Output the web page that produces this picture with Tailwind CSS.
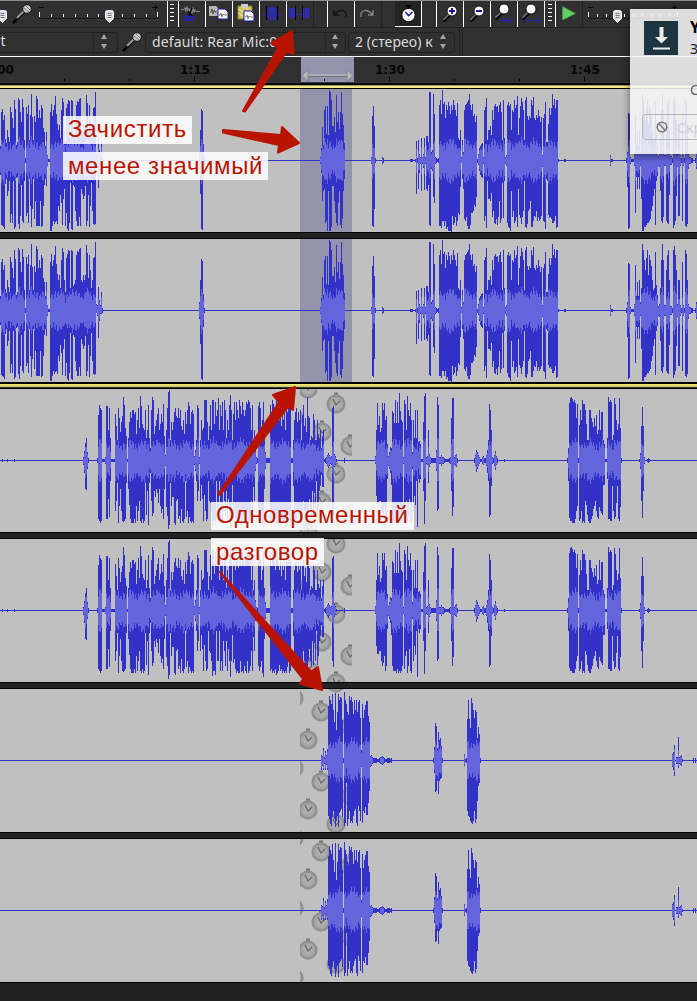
<!DOCTYPE html>
<html lang="ru">
<head>
<meta charset="utf-8">
<title>Audio editor</title>
<script src="https://cdn.jsdelivr.net/npm/@tailwindcss/browser@4"></script>
</head>
<body class="bg-[#222] overflow-hidden">
<svg class="absolute w-0 h-0">
  <defs>
    <radialGradient id="cg"><stop offset="0" stop-color="#b6b6b6"/><stop offset=".65" stop-color="#a6a6a6"/><stop offset=".85" stop-color="#8c8c8c"/><stop offset="1" stop-color="#9a9a9a"/></radialGradient>
    <g id="clock"><rect x="-2" y="-11.500" width="4" height="3" fill="#777"/><circle r="9.700" fill="url(#cg)"/><path d="M-3-5L0 1L4-3" fill="none" stroke="#666" stroke-width="1.300"/></g>
    <g id="mic"><path d="M1 19L12 8" stroke="#000" stroke-width="2.500"/><path d="M5 14L13 6" stroke="#999" stroke-width="2.200"/><circle cx="15" cy="5" r="4.300" fill="#ccc" stroke="#111"/><path d="M12 4l5 4M14 2l4 4" stroke="#777"/></g>
    <g id="thumb"><path d="M.5 2.500q0-2 2-2h4q2 0 2 2v6l-4 4l-4-4z" fill="#dfdfea" stroke="#fff"/><path d="M2.500 3.500h4M2.500 5.500h4M2.500 7.500h4" stroke="#77778a"/></g>
    <g id="updown" fill="#a3a3a3"><path d="M0 5L3 0L6 5zM0 10h6L3 15z"/></g>
    <g id="lens"><path d="M7 21L14 14" stroke="#000" stroke-width="4"/><path d="M7 20L14 13" stroke="#666" stroke-width="2"/></g>
    <path id="page" d="M0 0h7l3 3v7H0z"/>
  </defs>
</svg>
<main class="relative w-[697px] h-[1001px] overflow-hidden flex flex-col">

  <header class="h-[28px] shrink-0 bg-[#303030] border-t border-[#888c8c] border-b border-b-[#242424] flex">
    <svg class="w-[168px] h-[26px] shrink-0" viewBox="0 1 168 26">
      <use href="#thumb" x="-2" y="10"/>
      <use href="#mic" x="12" y="4"/>
      <path d="M39 18.500H161" stroke="#161616"/><path d="M39 7.500h5M152 7.500h6M155.500 5v5" stroke="#080808"/>
      <path d="M39.500 12v5M157.500 12v5M51.500 14v3M63.500 14v3M75.500 14v3M87.500 14v3M98.500 14v3M122.500 14v3M134.500 14v3M146.500 14v3" stroke="#fff"/>
      <use href="#thumb" x="105" y="10"/>
      <path d="M167.500 1v26" stroke="#fff"/>
    </svg>
    <svg class="w-[10px] h-[26px] shrink-0" viewBox="168 1 10 26"><path d="M170 4.500h4M170 8.500h4M170 12.500h4M170 16.500h4M170 20.500h4" stroke="#fff"/></svg>
    <svg class="w-[27px] h-[26px] shrink-0 border-l border-white" viewBox="1 1 26 26"><path d="M3 9.500h3l1-2 1 4 1-5 1 5 1-3 1 5 1-5 1 5 1-6 1 5 1-3 1 2h4" fill="none" stroke="#8a8a8a"/><path d="M10 11l4 5M14 8l-3 8" stroke="#000" stroke-width="1.300"/><circle cx="8.500" cy="18" r="2.200" fill="none" stroke="#2222c8" stroke-width="1.400"/><circle cx="13" cy="18.500" r="2.200" fill="none" stroke="#2222c8" stroke-width="1.400"/></svg>
    <svg class="w-[27px] h-[26px] shrink-0 border-l border-white" viewBox="1 1 26 26"><use href="#page" x="4" y="6" fill="#b5b5b5"/><path d="M5 12h1l1-3 1 5 1-4 1 2h2" stroke="#555" fill="none"/><use href="#page" x="13" y="9" fill="#fff" stroke="#1818a0"/><path d="M14 15h1l1-2 1 4 1-3 1 1h3" stroke="#777" fill="none"/></svg>
    <svg class="w-[27px] h-[26px] shrink-0 border-l border-white" viewBox="1 1 26 26"><path d="M6 6h14v13H6z" fill="#d0c25c" stroke="#8a7b20"/><path d="M6 9l14 8M6 13l9 6M10 6l10 6" stroke="#efe49b"/><rect x="9" y="4" width="7" height="4" fill="#ccc"/><use href="#page" x="12" y="11" fill="#fff" stroke="#1818a0"/><path d="M13 17h1l1-2 1 4 1-3 1 1h3" stroke="#777" fill="none"/></svg>
    <svg class="w-[27px] h-[26px] shrink-0 border-l border-white" viewBox="1 1 26 26"><path d="M3 14.500h5M18 14.500h5" stroke="#2b2bd0"/><path d="M9 18V8h2v11h2V8h2v11h2V8" fill="none" stroke="#2c2cd8" stroke-width="1.300"/><path d="M7.500 6v14M18.500 6v14" stroke="#000" stroke-width="1.300"/></svg>
    <svg class="w-[27px] h-[26px] shrink-0 border-l border-white" viewBox="1 1 26 26"><path d="M3.500 17V9h2v9h1.500V8h1.500v9M10 14.500h7M17.500 17V9h2v9h1.500V9h1.500v9" fill="none" stroke="#2c2cd8" stroke-width="1.200"/><path d="M9.500 6v14M16.500 6v14" stroke="#000"/></svg>
    <div class="w-[14px] shrink-0 border-l border-[#222]"></div>
    <svg class="w-[27px] h-[26px] shrink-0 border-l border-white" viewBox="1 1 26 26"><path d="M7 10v5h5M7 15q7-8 12-2v4" fill="none" stroke="#111" stroke-width="1.300"/></svg>
    <svg class="w-[27px] h-[26px] shrink-0 border-l border-white" viewBox="1 1 26 26"><path d="M19 10v5h-5M19 15q-7-8-12-2v4" fill="none" stroke="#858585" stroke-width="1.300"/></svg>
    <div class="w-[14px] shrink-0 border-l border-[#222]"></div>
    <svg class="w-[27px] h-[26px] shrink-0 border-r border-b border-white bg-[#232323]" viewBox="0 1 26 25"><circle cx="13.500" cy="15" r="6.700" fill="#fff" stroke="#000"/><path d="M11 6h5M13.500 6v3" stroke="#000" stroke-width="2"/><path d="M10.500 12l3 3.500 4-3.500" stroke="#1a1aa8" fill="none" stroke-width="1.600"/></svg>
    <div class="w-[14px] shrink-0"></div>
    <svg class="w-[27px] h-[26px] shrink-0 border-l border-white" viewBox="1 1 26 26"><use href="#lens"/><circle cx="16" cy="11" r="5" fill="#fff" stroke="#111"/><path d="M13 11h6M16 8v6" stroke="#1818a8" stroke-width="2"/></svg>
    <svg class="w-[27px] h-[26px] shrink-0 border-l border-white" viewBox="1 1 26 26"><use href="#lens"/><circle cx="16" cy="11" r="5" fill="#fff" stroke="#111"/><path d="M13 11h6" stroke="#1818a8" stroke-width="2"/></svg>
    <svg class="w-[27px] h-[26px] shrink-0 border-l border-white" viewBox="1 1 26 26"><use href="#lens" x="-2" y="-2"/><circle cx="14" cy="9" r="5" fill="#fff" stroke="#111"/><path d="M10 20.500h13M13 18l3 2.500-3 2.500M20 18l-3 2.500 3 2.500" stroke="#2020c0" fill="none"/></svg>
    <svg class="w-[27px] h-[26px] shrink-0 border-l border-white" viewBox="1 1 26 26"><use href="#lens" x="-2" y="-2"/><circle cx="14" cy="9" r="5" fill="#fff" stroke="#111"/><path d="M10.500 18v5M22.500 18v5M11 20.500h12" stroke="#2020c0" fill="none"/></svg>
    <svg class="w-[12px] h-[26px] shrink-0 border-r border-l border-white" viewBox="0 1 10 26"><path d="M3 4.500h4M3 8.500h4M3 12.500h4M3 16.500h4M3 20.500h4" stroke="#fff"/></svg>
    <svg class="w-[27px] h-[26px] shrink-0 border-r border-[#222]" viewBox="0 1 27 26"><path d="M7 6.500L20 13.500L7 20z" fill="#62d062" stroke="#4cab4c"/></svg>
    <svg class="w-[114px] h-[26px] shrink-0" viewBox="583 1 114 26"><path d="M588 18.500h92" stroke="#161616"/><path d="M588 7.500h5M672 7.500h5M674.500 5v5" stroke="#080808"/><path d="M588.500 12v5M597.500 14v3M606.500 14v3M624.500 14v3M633.500 14v3M642.500 14v3M651.500 14v3M660.500 14v3M669.500 14v3M677.500 12v5" stroke="#fff"/><use href="#thumb" x="613" y="10"/></svg>
  </header>

  <section class="h-[28px] shrink-0 bg-[#303030] flex items-center text-[#dcdcdc] text-[14px]" style="font-family:'Noto Sans','Open Sans',sans-serif">
    <div class="w-[118px] h-[21px] border border-l-0 border-[#222] rounded-r-[3px] flex items-center shrink-0"><span class="w-[97px] h-[20px] leading-[18px] border-r border-[#262626]"><span class="-ml-[3px]">lt</span></span><svg class="w-[18px] h-[16px] ml-[6px]"><use href="#updown" x="1"/></svg></div>
    <svg class="w-[27px] h-[22px] shrink-0"><use href="#mic" x="4" y="1"/></svg>
    <div class="w-[201px] h-[21px] border border-[#222] rounded-[3px] flex items-center shrink-0"><span class="w-[180px] pl-[6px] h-[19px] leading-[17px] border-r border-[#262626] whitespace-nowrap tracking-[.15px]">default: Rear Mic:0</span><svg class="w-[14px] h-[16px] ml-[5px]"><use href="#updown" x="1"/></svg></div>
    <div class="ml-[2px] w-[107px] h-[21px] border border-[#222] rounded-[3px] flex items-center shrink-0"><span class="w-[84px] pl-[6px] h-[19px] leading-[17px] whitespace-nowrap tracking-[.1px]">2 (стерео) к</span><svg class="w-[14px] h-[16px] ml-[7px]"><use href="#updown"/></svg></div>
    <div class="ml-[4px] w-[4px] h-full border-x border-[#1f1f1f]"></div>
  </section>

  <section class="h-[29px] shrink-0 border-t border-white bg-[#303030]">
    <svg class="w-[697px] h-[28px]" viewBox="0 57 697 28" style="font-family:'DejaVu Sans',sans-serif">
      <rect x="301" y="57" width="53" height="25" fill="#9294ab"/>
      <g font-size="12" font-weight="bold" fill="#050505"><text x="-16" y="74">1:00</text><text x="180" y="74">1:15</text><text x="375" y="74">1:30</text><text x="570" y="74">1:45</text></g>
      <path d="M64.500 79v2M129.500 79v2M194.500 77v4M259.500 79v2M324.500 79v2M389.500 77v4M454.500 79v2M519.500 79v2M584.500 77v4" stroke="#000"/>
      <path d="M302 75.500l6-6v12zM353 75.500l-6-6v12z" fill="#b8b8b8" stroke="#777" stroke-width=".7"/><path d="M308 75h39" stroke="#c6c6c6"/><path d="M308 76.500h39" stroke="#777"/>
      <rect y="82" width="697" height="1" fill="#3a3a3a"/><rect y="83" width="697" height="2" fill="#050505"/>
    </svg>
  </section>

  <div class="h-[3px] shrink-0 bg-[#f5ea86] border-t border-[#a29c65]"></div>
  <div class="flex flex-col shrink-0">
    <svg data-track="A" class="w-[697px] h-[145px] border-y border-black bg-[#c0c0c0]"></svg>
    <div class="h-[5px] bg-[#222]"></div>
    <svg data-track="A" class="w-[697px] h-[145px] border-y border-black bg-[#c0c0c0]"></svg>
  </div>
  <div class="h-[5px] shrink-0 border-t border-t-black border-b border-b-[#333318] bg-linear-to-b from-[#f8ee70] to-[#c9c27c]"></div>
  <div class="flex flex-col gap-[5px] bg-[#222] shrink-0">
    <svg data-track="B" data-top="389" class="w-[697px] h-[145px] border-y border-black bg-[#c0c0c0]"></svg>
    <svg data-track="B" data-top="539" class="w-[697px] h-[145px] border-y border-black bg-[#c0c0c0]"></svg>
    <svg data-track="C" data-top="689" class="w-[697px] h-[145px] border-y border-black bg-[#c0c0c0]"></svg>
    <svg data-track="C" data-top="839" class="w-[697px] h-[145px] border-y border-black bg-[#c0c0c0]"></svg>
  </div>

  <svg class="absolute inset-0 w-[697px] h-[1001px]" fill="#b81400" stroke="#b81400" stroke-width="2" stroke-linejoin="round">
    <path d="M243 111L278 48L271 43L292 31L293.500 54L287 51L245 111.500z"/>
    <path d="M223 130L281 135L282 127L299 143L278 152.500L279 145L223 132.500z"/>
    <path d="M218.500 494L279 402L273 395L295 387L293 410L288 407L220 495z"/>
    <path d="M220 572L311 671.500L318 667L322 690L300 683.500L303 679L221 574z"/>
  </svg>

  <div class="absolute left-[63px] top-[116px] flex flex-col items-start gap-[8px] text-[24px] text-[#b81400]" style="font-family:'Liberation Sans',Arial,sans-serif">
    <span class="w-[129px] h-[28px] leading-[26px] pl-[5px] bg-white/85 whitespace-nowrap tracking-[.65px]">Зачистить</span>
    <span class="w-[205px] h-[28px] leading-[28px] pl-[5px] bg-white/85 whitespace-nowrap tracking-[.6px]">менее значимый</span>
  </div>
  <div class="absolute left-[211px] top-[502px] flex flex-col items-start gap-[8px] text-[24px] text-[#b81400]" style="font-family:'Liberation Sans',Arial,sans-serif">
    <span class="w-[203px] h-[28px] leading-[26px] pl-[5px] bg-white/85 whitespace-nowrap tracking-[.55px]">Одновременный</span>
    <span class="w-[113px] h-[28px] leading-[28px] pl-[5px] bg-white/85 whitespace-nowrap tracking-[.55px]">разговор</span>
  </div>

  <aside class="absolute left-[630px] top-[9px] w-[180px] h-[145px] bg-[#f5f5f5]/88 shadow-[0_2px_8px_rgba(0,0,0,.5)] text-[14px]" style="font-family:'Noto Sans',sans-serif">
    <div class="flex pt-[12px] pl-[14px]">
      <svg class="w-[34px] h-[34px] bg-[#1d3540] shrink-0" viewBox="0 0 34 34" fill="#ecece8"><path d="M15.500 6h4v10h4.500L17.500 22.500L11 16h4.500zM9 26.500h17v2H9z"/></svg>
      <div class="ml-[12px] -mt-[5px] leading-[22px]"><p class="font-bold text-[16px] text-black">Y</p><p class="text-[#222]">З</p></div>
    </div>
    <p class="ml-[60px] mt-[20px] leading-[20px] text-[#666]">С</p>
    <div class="ml-[12px] mt-[14px] w-[150px] h-[26px] rounded-[4px] border border-[#b4b4b8] flex items-center text-[#cfcfd3]">
      <svg class="w-[12px] h-[12px] ml-[13px] mr-[9px]" fill="none" stroke="#77777c" stroke-width="1.500"><circle cx="6" cy="6" r="4.800"/><path d="M2.500 2.500l7 7"/></svg>Скрыть
    </div>
  </aside>
</main>

<script>
// Amplitude columns: "x: up/down ..." one entry per pixel column, in pixels from the centre line.
const WAVES = {
A: `0: 14 48/64 51/65 40/66 45/68 21/23 17/18 30/35 23/30 18/20 53/62 48/53 42/62 32/20 60/68 51/66 15/17 18/16 62/63 60/68 48/55 38/24 61/60 53/62 20 2 53/55 46/52 55/62 20/18 45 66 43/48 20/18 44/58 38/40 64/65 61/65 42/65 50/65 42/40 55/66 52/65 32/45 28/24 14/18 28/25 5 1 1 48/70 56/70 44/65 50/60 55/63 64/61 46/60 36/63 30/45 35/50 22/34 50/42 62/64 58/38 30/28 18/65 52 56/68 60/70 59/62 22 60/68 59/69 24 26 30/50 55/60 59/65 58/65 61/56 62/65 30/28 28/33 35/38 30/35 35/25 65 57/60 32/34 55/66 40/45 22 30/50 52/63 53/64 68/63 6/2 5 23/27 10 5/3 18/3 2
199: 8 30/33 51/68 49/69 16 2
320: 3 12 33/40 15/30 50/28 54/62 26/60 54/70 25/30 70 68/70 60/66 34/25 34/25 43/40 28/52 65/62 38/65 48/42 31/30 48/64 68/67 46/58 35/30 17/18
371: 3 44/65 54/66 34/48 2
382: 3 2
410: 1 1 1
415: 1 19/33 2 20/28 6/12 3 22/30 3 6/7 22/29 3 24/28 24/30 18/24 68/64 68/65 8 10 66/36 46/42 3 2 1 2 55/65 60/65 46/67 70/60 56/60 58/65 42/60 55/68 50/66 58/70 54/70 46/70 55/71 50/55 60/64 55/62 50/56 44/65 57/60 22/52 20/54 30/26 3/2 20/18 8/28 50/58 55/60 56 58/65 60/68 66/68 55/64 50/52 56/52 44/50 46/44 38/46 44/36 1/2 6/4 12/10 14 16 17 3 50/60 53/55 62/67 20 30/38 30/38 34/40 25/32 50/56 40/50 54/62 56/63 53/58 54/64 48/56 55/40 58/62 48/58 20/22 60/57 22/20 3 5 55/62 58/66 54/67 56/70 30 50/56 48/50 60/62 52/60 55/56 64/66 25/28 42/54 54/57 62/63 58/56 50 20 60/66 63/67 44/63 40/50 44/48 42/40 60/66 55/66 63/60 42/55 40/56 45/50 42/60 50/56 44/60 38/58 43/55 5/6 42/60 46/61 58/68 18 18/20 36/54 52/57 45/56 52/58 66/62 55/62 61/60 52/55 60/67 60/66 1
564: 1 1
610: 5 1 1
626: 2 8/26 47/68 46/67 3 1 1 1 6/5 45/52 14/16 28 14/16 30/28 8/5 22/38 66/70 60/70 50/66 40/66 52/64 60/62 35/62 55/60 50/58 44/50 30/45 20/35 22/28 58/64 25/20 15 4/5 6 22/30 50/60 66/62 50/56 5 5 40/60 55/62 60/63 30/34 4 4 2 60/67 64 55/60 40/35 6 30/55 30/55 5 2 48/60 5 2 60/65 56/66 30/63 6/8 3 3 2 2 0 0 2 8 9`,
B: `2: 1
7: 1
14: 1
83: 3/4 9/12 17/28 22/29 8 2
97: 2 45/58 55/60 52/62 50/60 1 1 1 3 54/58 54/58 30/38 52/56 22/20 1 1 1 1 46/50 34/40 20/22 52/62 42/45 28 38/50 44/60 63/61 55/60 32/58 24/22 1 22/28 38/44 48/58 42/62 50/62 50/62 46/58 48/62 26/45 40/60 52/50 32/40 64/60 54/62 36/58 32/62 30/60 50/22 22/54 30 55/64 22 12 50/40 63/55 60/52 26/30 34/36 40/28 46/32 52/42 30/28 36/45 46/52 38/48 56/58 24/28 5 30/46 52/55 68 70/64 20/22 38/45 30/36 38/36 48/62 52/64 44/40 42/38 52/58 42/55 50/62 34/48 30/60 40/62 26/58 48/20 36/56 50 58/62 54/56 36/60 48/62 50/60 46/62 4 10 20 55/40 52/30 3 20/40 40/24 30/38 32/60 60/34 60/50 60 38/58 20 34/40 55/42 30/50 60/65 60 36/60 58/64 44/20 50 62/50 30/20 55/60 44/50 58/60 30 60/40 50/55 22/30 40/60 30/38 55/50 65/66 50 20/24 46/52 58/48 40/58 58/62 50/60 42/62 60/62 54/50 46/61 58/60 50/62 44/55 50/60 58/62 56/50 60/62 58/60 52/55 30/40 55/60 20/26 30/40 10 3 2 54/55 58/60 52/56 30/50 40/62 58/66 22/28 8 2 2 2 2 55/60 44/58 60/62 56/60 48/62 40/58 62/64 55/62 44/60 40/54 52/60 34/58 48/62 40/60 62 30/60 55/62 48/56 60/50 54/62 56/60 2 2 20/25 40/50 48/60 52/58 38/50 48/55 40/50 50/60 20/56 45/50 55/40 34/50 42/55 28/58 63/60 44/50 42/38 20/50 24/55 22/30 46/54 40/32 20/50 20 40/54 26/45 22/30 30/25 12/14 24/26 30/26 1 2 3 5 7 5 3 4 52/50 54/56 6 4 1
344: 2
375: 4/3 30/35 57/43 35/43 44/40 28/40 32/50 57/55 50/52 57/45 40/60 44/55 16/18 4/5 8 13/12 12/24 49/55 47/60 37/60 60 37/62 58 37/62 67/60 49/62 40/60 38/55 3 60/58 56/45 30/40 64/62 50/55 44/38 57/60 40/62 8 40/50 22/35 50/44 22/20 50/66 18 19/22 16/18 1 1 38/30 64/63 67/40 3 4 30/22 6 3 2 2 2 2 2 10 63/50 55/48 3 3 5 3 3 2 1 1 1 1 2 3 42/30 62/55 62/46 3/4 5 6 2
474: 2 5 10/11 8 5 3 1 1 3 4 2 2 5 10/12 20 56 50/54 30/25 3 2 5 9 4 2
504: 1
567: 2 12/20 57 62/60 63/60 61/62 58/62 60/62 57/58 42/50 56/45 2 35/60 50/58 40/50 60/62 56/60 56/62 50/40 36/44 20/54 20/60 50/62 50/62 42/58 38/55 33/48 42/45 34/40 45/50 26/56 30/58 50/46 30/50 48/52 48/54 20/24 16/24 1 1 22/18 63/58 58 60 58/60 20/25 25/50 62/58 56 40/42 30/25 36/58 62/60 32/46 2
639: 1 7/8 34/40 53/57 34/30 3
647: 1 2 1`,
C: `321: 5/9 4/5 12/9 3 9 5/4 11/9 54/55 64/58 60/63 56/65 66/56 50 38/58 67/66 30/60 48/55 66 60/52 63/50 62/48 40/56 2 68/65 60/62 56/22 48/65 45/58 64/50 60/62 63/60 58/62 46/55 60/50 50/48 60/62 48/65 58/45 60/50 42/60 10/6 56/62 42/50 50/52 55/46 59/54 59/54 44/42 38/30 4/6 5 3 2 2 2 2 1 1 2 3 3 4 3 2 1 1 2 2 2 1 2
433: 2 13/12 37/31 34/30 12/20 28/33 20 22/18 14/17 2
464: 6/5 1 2 41/50 60/55 41/56 32/60 62 57/63 50/60 42/50 50/62 48/58 22/40 33/25 26/22 2
672: 6 8/9 15/15 0 1 3 3/4 0 4 5 1
674: 15
676: 3 3 23/7 3 4
693: 2 0 2`
};
// Centres of the sync-lock clock tiles, in window coordinates.
const CLOCKS = [[308,389],[336,404],[294,418],[322,432],[350,446],[336,474],[294,488],[322,502],[350,516],[308,529],[336,544],[322,572],[294,586],[350,586],[336,614],[322,642],[350,656],[308,669],[336,683],
[294,698],[321,712],[350,726],[308,740],[294,768],[321,782],[350,796],[308,810],[336,824],[294,838],[321,852],[350,866],[308,880],[294,908],[321,922],[350,936],[308,950],[336,964],[294,978]];
document.querySelectorAll('[data-track]').forEach(svg => {
  const c = 71;
  let outer = 'M0 ' + c + 'h697v1H0z', inner = '';
  WAVES[svg.dataset.track].split('\n').forEach(line => {
    const [start, list] = line.split(':');
    list.trim().split(' ').forEach((p, i) => {
      const x = +start + i, [u, d = u] = p.split('/').map(Number);
      outer += `M${x} ${c - u}h1v${u + d + 1}h-1z`;
      if (u > 2) {
        const k = 16 + Math.sin(x * 2.1) * 3 + Math.sin(x * .45) * 3;
        const iu = Math.round(Math.min(u * .75, k + (u - 45) * .12)), id = Math.round(Math.min(d * .75, k + (d - 50) * .12));
        inner += `M${x} ${c - iu}h1v${iu + id + 1}h-1z`;
      }
    });
  });
  const top = +svg.dataset.top;
  const back = top
    ? `<svg x="300" y="0" width="52" height="143">` + CLOCKS.map(([x, y]) => `<use href="#clock" x="${x - 300}" y="${y - top}"/>`).join('') + '</svg>'
    : '<rect x="300" width="52" height="143" fill="#9393ab"/>';
  svg.innerHTML = back + `<g shape-rendering="crispEdges"><path d="${outer}" fill="#3232c8"/><path d="${inner}" fill="#6464dc"/></g>`;
});
</script>
</body>
</html>
